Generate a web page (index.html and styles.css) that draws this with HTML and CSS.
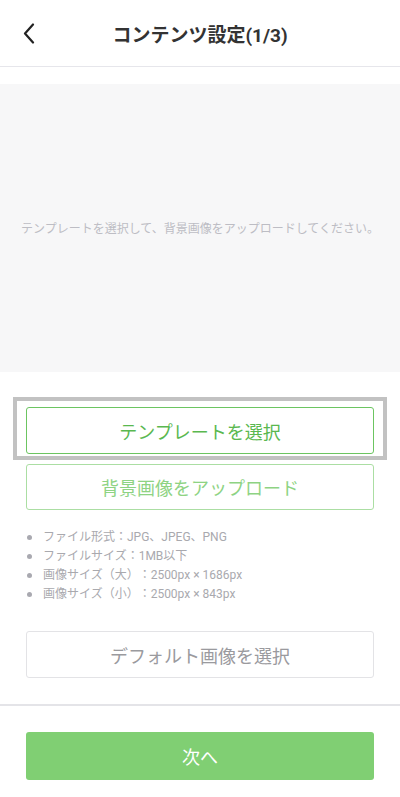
FILE: index.html
```html
<!DOCTYPE html>
<html lang="ja">
<head>
<meta charset="utf-8">
<title>コンテンツ設定</title>
<link rel="stylesheet" href="styles.css">
</head>
<body>
<div class="app">
  <header class="header">
    <div class="back">
      <svg width="12" height="21" viewBox="0 0 12 21"><path d="M10 1.5 L2 10.5 L10 19.5" fill="none" stroke="#222" stroke-width="2.2" stroke-linecap="round" stroke-linejoin="round"/></svg>
    </div>
    <h1 class="title">コンテンツ設定(1/3)</h1>
    <div></div>
  </header>

  <div class="preview">
    <p class="preview-text">テンプレートを選択して、背景画像をアップロードしてください。</p>
  </div>

  <div class="highlight">
    <button class="btn btn-green">テンプレートを選択</button>
  </div>
  <button class="btn btn-light-green">背景画像をアップロード</button>

  <ul class="specs">
    <li>ファイル形式：JPG、JPEG、PNG</li>
    <li>ファイルサイズ：1MB以下</li>
    <li>画像サイズ（大）：2500px × 1686px</li>
    <li>画像サイズ（小）：2500px × 843px</li>
  </ul>

  <button class="btn btn-gray">デフォルト画像を選択</button>

  <div class="divider"></div>

  <button class="btn btn-next">次へ</button>
</div>
</body>
</html>
```

FILE: styles.css
```css
* { box-sizing: border-box; }
html, body { margin: 0; padding: 0; background: #fff; }
body {
  font-family: "Roboto", "Noto Sans CJK JP", "Noto Sans", sans-serif;
  color: #333;
  text-spacing-trim: space-all;
}
.app { width: 400px; display: flex; flex-direction: column; }

.header {
  height: 67px;
  border-bottom: 1px solid #e6e6eb;
  display: grid;
  grid-template-columns: 60px 1fr 60px;
  align-items: center;
}
.back { padding-left: 23px; display: flex; align-items: center; padding-top: 1px; }
.title {
  margin: 0;
  text-align: center;
  font-size: 19px;
  font-weight: 700;
  color: #333;
  letter-spacing: 0;
}

.preview {
  margin-top: 17px;
  height: 288px;
  background: #f7f7f8;
  display: flex;
  align-items: center;
  justify-content: center;
}
.preview-text {
  margin: 0;
  font-size: 12px;
  color: #bdbdc4;
  padding-bottom: 2px;
}

.btn {
  display: block;
  font-family: inherit;
  font-size: 18px;
  border-radius: 3px;
  background: #fff;
  padding: 0;
  cursor: pointer;
}
.highlight {
  margin: 25px 13px 0;
  border: 4px solid #c2c2c2;
  padding: 6px 9px 2px;
}
.btn-green {
  width: 100%;
  height: 47px;
  border: 1.5px solid #6cc561;
  color: #5ab84f;
}
.btn-light-green {
  margin: 4px 26px 0;
  height: 46px;
  border: 1.5px solid #abdea3;
  color: #8ed383;
}

.specs {
  margin: 18px 0 0;
  padding: 0 0 0 43px;
  list-style: none;
  font-size: 12px;
  line-height: 19px;
  color: #a9a9ae;
}
.specs li { position: relative; }
.specs li::before {
  content: "";
  position: absolute;
  left: -16px;
  top: 7px;
  width: 5px;
  height: 5px;
  border-radius: 50%;
  background: #a9a9b0;
}

.btn-gray {
  margin: 27px 26px 0;
  height: 47px;
  border: 1px solid #e3e3e6;
  color: #9a9a9e;
}

.divider {
  margin-top: 26px;
  height: 2px;
  background: #e4e4e8;
}

.btn-next {
  margin: 26px 26px 0;
  height: 48px;
  border: none;
  background: #80cf73;
  color: #fff;
}
```
